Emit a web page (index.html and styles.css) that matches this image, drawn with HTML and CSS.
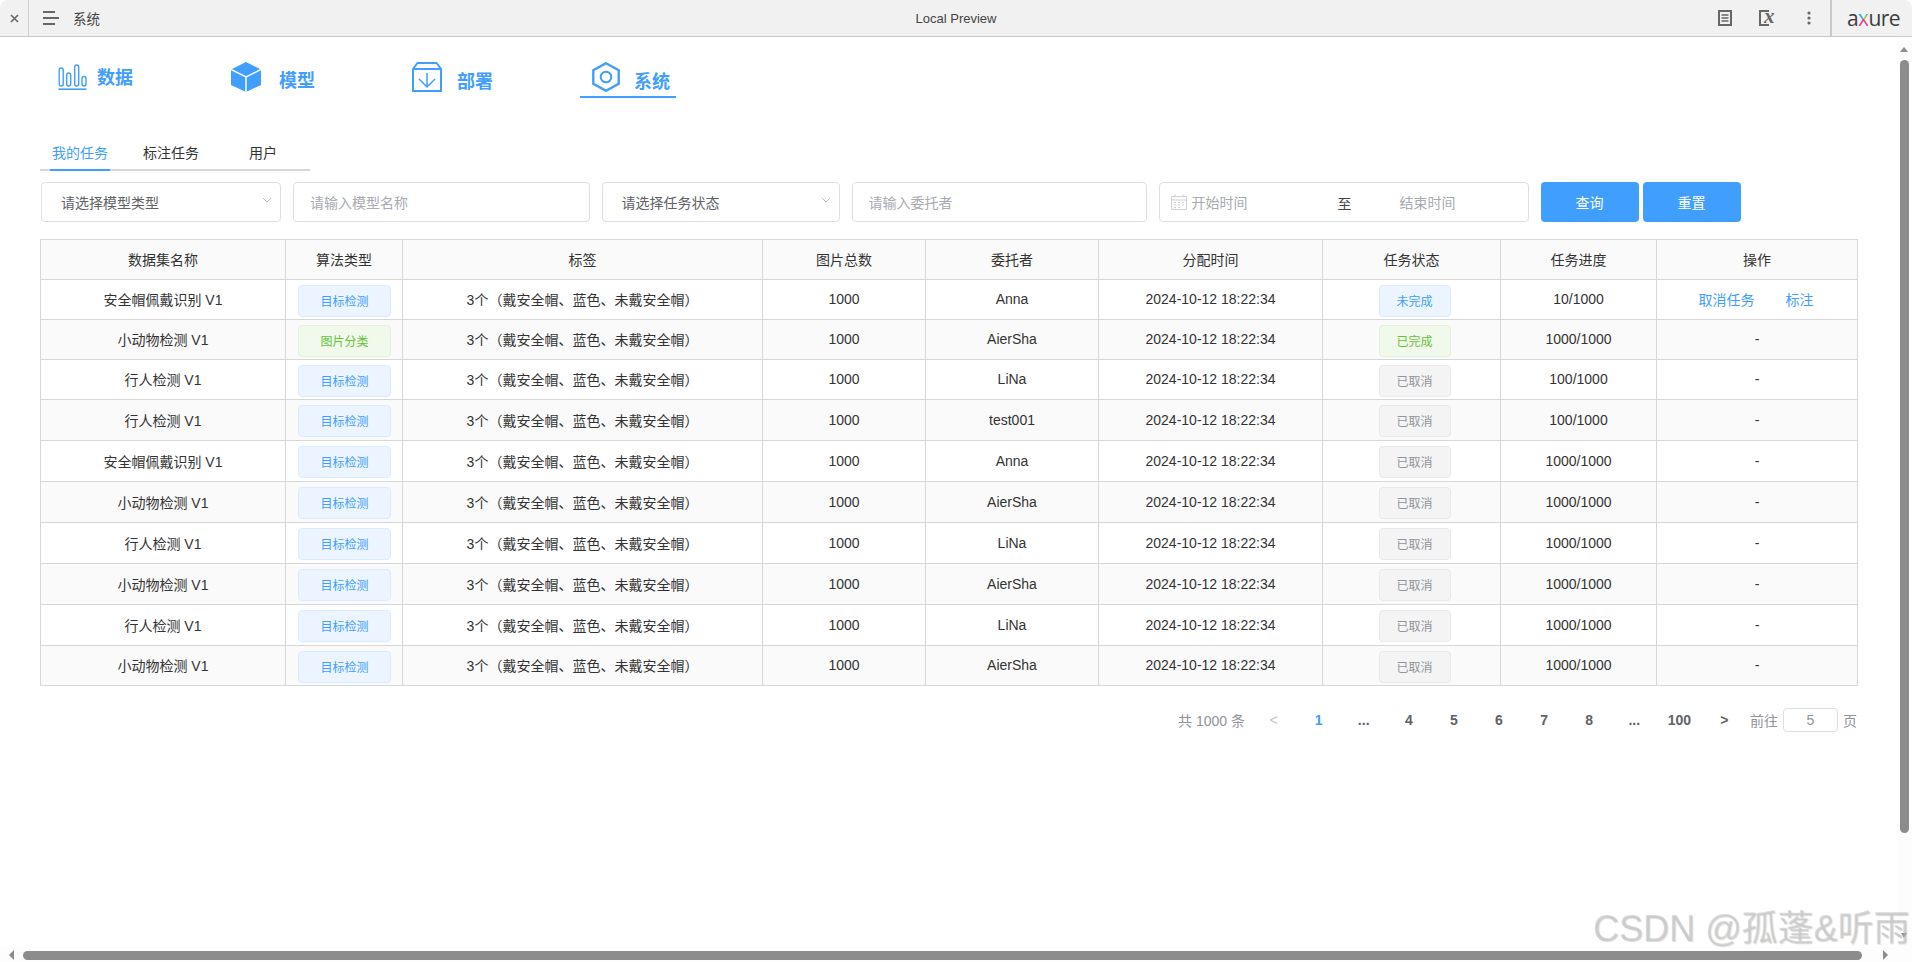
FILE: index.html
```html
<!DOCTYPE html>
<html lang="zh-CN">
<head>
<meta charset="utf-8">
<title>Local Preview</title>
<link rel="stylesheet" href="styles.css">
</head>
<body>
<header class="topbar">
  <div class="close-box"><svg width="9" height="9" viewBox="0 0 9 9"><path d="M1 1l7 7M8 1L1 8" stroke="#666" stroke-width="1.6" fill="none"/></svg></div>
  <div class="menu-ico"><svg width="16" height="14" viewBox="0 0 16 14"><path d="M0 1h12M0 7h16M0 13h12" stroke="#666" stroke-width="2" fill="none"/></svg></div>
  <div class="page-name">系统</div>
  <div class="preview-title">Local Preview</div>
  <div class="tools">
    <svg class="tool-a" width="14" height="16" viewBox="0 0 14 16"><path d="M1 1h12v14H1z" fill="none" stroke="#666" stroke-width="2"/><path d="M3.5 5h7M3.5 8h7M3.5 11h7" stroke="#666" stroke-width="1.4"/></svg>
    <div class="tool-b"><span class="var-x">x</span></div>
    <svg class="tool-c" width="4" height="14" viewBox="0 0 4 14"><circle cx="2" cy="2" r="1.6" fill="#666"/><circle cx="2" cy="7" r="1.6" fill="#666"/><circle cx="2" cy="12" r="1.6" fill="#666"/></svg>
  </div>
  <div class="brand"><span>a</span><span class="brand-x">x</span><span>ure</span></div>
</header>

<main class="main">
  <nav class="nav">
    <a class="nav-item nav-data">
      <svg width="29" height="26" viewBox="0 0 29 26" fill="none" stroke="#409eff" stroke-width="1.4"><rect x="1.2" y="4" width="4" height="18" rx="2"/><rect x="8.7" y="9" width="4" height="13" rx="2"/><rect x="16.7" y="1" width="4" height="21" rx="2"/><rect x="24" y="12.5" width="4" height="9.5" rx="2"/><path d="M0.5 25.2h28" stroke-width="1.6"/></svg>
      <span class="nav-text">数据</span>
    </a>
    <a class="nav-item nav-model">
      <svg width="30" height="30" viewBox="0 0 30 30"><path d="M15 0l15 7.500v15.500L15 30 0 23V7.500z" fill="#409eff"/><path d="M0 7.500l15 7.500 15-7.500M15 15v15" fill="none" stroke="#fff" stroke-width="1.5"/></svg>
      <span class="nav-text">模型</span>
    </a>
    <a class="nav-item nav-deploy">
      <svg width="30" height="30" viewBox="0 0 30 30" fill="none" stroke="#409eff"><path d="M1 7l4.500-6h19L29 7v22H1zM1 7h28" stroke-width="2"/><path d="M15 11v14M7 17l8 8 8-8" stroke-width="1.500"/></svg>
      <span class="nav-text">部署</span>
    </a>
    <a class="nav-item nav-system">
      <svg width="28" height="30" viewBox="0 0 28 30" fill="none" stroke="#409eff"><path d="M14 1.200l12.700 7v13.600L14 28.800 1.300 21.800V8.200z" stroke-width="2.400"/><circle cx="14" cy="15" r="5.300" stroke-width="2"/></svg>
      <span class="nav-text">系统</span>
    </a>
  </nav>

  <div class="tabs">
    <a class="tab tab-active">我的任务</a>
    <a class="tab tab-second">标注任务</a>
    <a class="tab tab-third">用户</a>
  </div>

  <form class="filters">
    <div class="field select select-a"><span>请选择模型类型</span><svg class="chev" width="10" height="6" viewBox="0 0 10 6"><path d="M1 1l4 4 4-4" fill="none" stroke="#c0c4cc"/></svg></div>
    <input class="field text-input input-a" placeholder="请输入模型名称">
    <div class="field select select-b"><span>请选择任务状态</span><svg class="chev" width="10" height="6" viewBox="0 0 10 6"><path d="M1 1l4 4 4-4" fill="none" stroke="#c0c4cc"/></svg></div>
    <input class="field text-input input-b" placeholder="请输入委托者">
    <div class="field date">
      <svg class="cal" width="16" height="16" viewBox="0 0 16 16" fill="none" stroke="#d0d0d0"><path d="M.5 2.500h15v13H.5zM.5 6h15M4 .5v3M12 .5v3"/><path d="M3 8.500h2M7 8.500h2M11 8.500h2M3 11h2M7 11h2M11 11h2M3 13.500h2M7 13.500h2" stroke-width="1"/></svg>
      <span class="date-ph">开始时间</span>
      <span class="date-sep">至</span>
      <span class="date-ph date-end">结束时间</span>
    </div>
    <div class="btns">
      <button type="button" class="btn">查询</button>
      <button type="button" class="btn">重置</button>
    </div>
  </form>

  <table class="grid">
    <colgroup>
      <col class="c1"><col class="c2"><col class="c3"><col class="c4"><col class="c5"><col class="c6"><col class="c7"><col class="c8"><col class="c9">
    </colgroup>
    <thead>
      <tr><th>数据集名称</th><th>算法类型</th><th>标签</th><th>图片总数</th><th>委托者</th><th>分配时间</th><th>任务状态</th><th>任务进度</th><th>操作</th></tr>
    </thead>
    <tbody>
      <tr><td>安全帽佩戴识别 V1</td><td class="tc tc-type"><span class="tag tag-type blue">目标检测</span></td><td class="labels">3个（戴安全帽、蓝色、未戴安全帽）</td><td>1000</td><td>Anna</td><td>2024-10-12 18:22:34</td><td class="tc tc-state"><span class="tag tag-state blue">未完成</span></td><td>10/1000</td><td class="ops"><a class="op">取消任务</a><a class="op op-second">标注</a></td></tr>
      <tr><td>小动物检测 V1</td><td class="tc tc-type"><span class="tag tag-type green">图片分类</span></td><td class="labels">3个（戴安全帽、蓝色、未戴安全帽）</td><td>1000</td><td>AierSha</td><td>2024-10-12 18:22:34</td><td class="tc tc-state"><span class="tag tag-state green">已完成</span></td><td>1000/1000</td><td>-</td></tr>
      <tr><td>行人检测 V1</td><td class="tc tc-type"><span class="tag tag-type blue">目标检测</span></td><td class="labels">3个（戴安全帽、蓝色、未戴安全帽）</td><td>1000</td><td>LiNa</td><td>2024-10-12 18:22:34</td><td class="tc tc-state"><span class="tag tag-state gray">已取消</span></td><td>100/1000</td><td>-</td></tr>
      <tr class="tall"><td>行人检测 V1</td><td class="tc tc-type"><span class="tag tag-type blue">目标检测</span></td><td class="labels">3个（戴安全帽、蓝色、未戴安全帽）</td><td>1000</td><td>test001</td><td>2024-10-12 18:22:34</td><td class="tc tc-state"><span class="tag tag-state gray">已取消</span></td><td>100/1000</td><td>-</td></tr>
      <tr class="tall"><td>安全帽佩戴识别 V1</td><td class="tc tc-type"><span class="tag tag-type blue">目标检测</span></td><td class="labels">3个（戴安全帽、蓝色、未戴安全帽）</td><td>1000</td><td>Anna</td><td>2024-10-12 18:22:34</td><td class="tc tc-state"><span class="tag tag-state gray">已取消</span></td><td>1000/1000</td><td>-</td></tr>
      <tr class="tall"><td>小动物检测 V1</td><td class="tc tc-type"><span class="tag tag-type blue">目标检测</span></td><td class="labels">3个（戴安全帽、蓝色、未戴安全帽）</td><td>1000</td><td>AierSha</td><td>2024-10-12 18:22:34</td><td class="tc tc-state"><span class="tag tag-state gray">已取消</span></td><td>1000/1000</td><td>-</td></tr>
      <tr class="tall"><td>行人检测 V1</td><td class="tc tc-type"><span class="tag tag-type blue">目标检测</span></td><td class="labels">3个（戴安全帽、蓝色、未戴安全帽）</td><td>1000</td><td>LiNa</td><td>2024-10-12 18:22:34</td><td class="tc tc-state"><span class="tag tag-state gray">已取消</span></td><td>1000/1000</td><td>-</td></tr>
      <tr class="tall"><td>小动物检测 V1</td><td class="tc tc-type"><span class="tag tag-type blue">目标检测</span></td><td class="labels">3个（戴安全帽、蓝色、未戴安全帽）</td><td>1000</td><td>AierSha</td><td>2024-10-12 18:22:34</td><td class="tc tc-state"><span class="tag tag-state gray">已取消</span></td><td>1000/1000</td><td>-</td></tr>
      <tr class="tall"><td>行人检测 V1</td><td class="tc tc-type"><span class="tag tag-type blue">目标检测</span></td><td class="labels">3个（戴安全帽、蓝色、未戴安全帽）</td><td>1000</td><td>LiNa</td><td>2024-10-12 18:22:34</td><td class="tc tc-state"><span class="tag tag-state gray">已取消</span></td><td>1000/1000</td><td>-</td></tr>
      <tr><td>小动物检测 V1</td><td class="tc tc-type"><span class="tag tag-type blue">目标检测</span></td><td class="labels">3个（戴安全帽、蓝色、未戴安全帽）</td><td>1000</td><td>AierSha</td><td>2024-10-12 18:22:34</td><td class="tc tc-state"><span class="tag tag-state gray">已取消</span></td><td>1000/1000</td><td>-</td></tr>
    </tbody>
  </table>

  <div class="pager">
    <span class="total">共 1000 条</span>
    <a class="pg pg-arrow pg-dim">&lt;</a>
    <a class="pg pg-current">1</a>
    <a class="pg">...</a>
    <a class="pg">4</a>
    <a class="pg">5</a>
    <a class="pg">6</a>
    <a class="pg">7</a>
    <a class="pg">8</a>
    <a class="pg">...</a>
    <a class="pg">100</a>
    <a class="pg pg-arrow">&gt;</a>
    <span class="goto">前往</span>
    <span class="goto-box">5</span>
    <span class="goto-end">页</span>
  </div>
</main>

<div class="vtrack">
  <span class="arr-up"></span>
  <span class="vthumb"></span>
  <span class="arr-down"></span>
</div>
<div class="htrack">
  <span class="arr-left"></span>
  <span class="hthumb"></span>
  <span class="arr-right"></span>
</div>
<div class="watermark">CSDN @孤蓬&amp;听雨</div>
</body>
</html>
```
FILE: styles.css
```css
* { box-sizing: border-box; }
html, body { margin: 0; padding: 0; }
body {
  width: 1912px;
  height: 962px;
  overflow: hidden;
  position: relative;
  background: #fff;
  font-family: "Liberation Sans", "Noto Sans CJK SC", sans-serif;
  font-size: 14px;
  color: #333;
}

/* top bar */
.topbar {
  height: 37px;
  display: flex;
  align-items: center;
  background: #f1f1f1;
  border-bottom: 1px solid #c9c9c9;
  border-radius: 8px 8px 0 0;
  position: relative;
}
.close-box {
  width: 29px;
  height: 36px;
  display: flex;
  align-items: center;
  justify-content: center;
  border-right: 1px solid #cfcfcf;
  padding-top: 1px;
}
.close-box svg { display: block; }
.menu-ico { margin-left: 14px; display: flex; }
.page-name { margin-left: 14px; font-size: 13.500px; color: #444; }
.preview-title {
  position: absolute;
  left: 0;
  right: 0;
  top: 11px;
  text-align: center;
  font-size: 13px;
  line-height: 16px;
  color: #444;
  pointer-events: none;
}
.tools { margin-left: auto; display: flex; align-items: center; height: 36px; }
.tool-a { display: block; }
.tool-b {
  margin: 0 4px 0 27px;
  width: 10px;
  height: 16px;
  border: 2px solid #666;
  border-right: 0;
  position: relative;
}
.var-x {
  position: absolute;
  left: 3px;
  top: -8px;
  font-family: "Liberation Serif", serif;
  font-style: italic;
  font-weight: bold;
  font-size: 21px;
  line-height: 24px;
  color: #666;
}
.tool-c { margin-left: 34px; display: block; }
.brand {
  margin-left: 19px;
  width: 82px;
  height: 36px;
  border-left: 2px solid #c9c9c9;
  padding-left: 15px;
  display: flex;
  align-items: center;
  font-family: "Open Sans", sans-serif;
  font-size: 21px;
  letter-spacing: -0.6px;
  color: #3c3c3c;
}
.brand-x {
  background: conic-gradient(from 45deg, #9bc83c 0 90deg, #e6398f 90deg 180deg, #17a9dc 180deg 360deg);
  -webkit-background-clip: text;
  background-clip: text;
  color: transparent;
}

/* main */
.main { padding: 25px 0 0 40px; }

.nav { display: flex; height: 36px; }
.nav-item { display: flex; align-items: flex-start; color: #409eff; }
.nav-item svg { display: block; flex: none; }
.nav-text { font-size: 18px; font-weight: bold; line-height: 20px; }
.nav-data { margin-left: 18px; padding-top: 2px; }
.nav-data .nav-text { margin-left: 10px; margin-top: 4px; }
.nav-model { margin-left: 98px; }
.nav-model .nav-text { margin-left: 18px; margin-top: 9px; }
.nav-deploy { margin-left: 97px; }
.nav-deploy .nav-text { margin-left: 15px; margin-top: 10px; }
.nav-system {
  margin-left: 87px;
  padding: 0 6px 0 12px;
  border-bottom: 2px solid #409eff;
}
.nav-system .nav-text { margin-left: 14px; margin-top: 10px; }

.tabs {
  display: flex;
  width: 270px;
  height: 38px;
  margin-top: 35px;
  border-bottom: 2px solid #d7d7d7;
}
.tab { height: 38px; line-height: 40px; font-size: 14px; }
.tab-active {
  width: 60px;
  margin-left: 10px;
  text-align: center;
  color: #409eff;
  border-bottom: 2px solid #409eff;
}
.tab-second { margin-left: 33px; }
.tab-third { margin-left: 50px; }

.filters { display: flex; gap: 12px; margin: 11px 0 0 1px; height: 40px; }
.field {
  height: 40px;
  background: #fff;
  border: 1px solid #dcdfe6;
  border-radius: 4px;
  font-family: inherit;
  font-size: 14px;
}
.select {
  display: flex;
  align-items: center;
  justify-content: space-between;
  padding: 0 8px 0 19px;
  color: #606266;
}
.select-a { width: 240px; }
.select-b { width: 238px; }
.chev { margin-top: -4px; display: block; }
.text-input { padding: 2px 0 0 16px; outline: 0; color: #606266; }
.text-input::placeholder { color: #a8abb2; opacity: 1; }
.input-a { width: 296.500px; }
.input-b { width: 295px; }
.date {
  width: 370px;
  display: flex;
  align-items: center;
  padding: 0 0 0 11px;
}
.cal { display: block; }
.date-ph { color: #a8abb2; margin-left: 5px; }
.date-sep { color: #444; margin-left: 90px; padding-top: 2px; }
.date-end { margin-left: 48px; }
.btns { display: flex; gap: 4px; }
.btn {
  width: 98px;
  height: 40px;
  padding: 0;
  border: 0;
  border-radius: 4px;
  background: #409eff;
  color: #fff;
  font-family: inherit;
  font-size: 14px;
}

/* table */
.grid {
  width: 1817px;
  margin-top: 17px;
  table-layout: fixed;
  border-collapse: collapse;
  font-size: 14px;
  color: #333;
}
.c1 { width: 245px; }
.c2 { width: 117px; }
.c3 { width: 360px; }
.c4 { width: 163px; }
.c5 { width: 173px; }
.c6 { width: 224px; }
.c7 { width: 178px; }
.c8 { width: 156px; }
.c9 { width: 201px; }
.grid tr { height: 40px; }
.grid tr.tall { height: 41px; }
.grid th, .grid td {
  padding: 0 0 1px;
  border: 1px solid #d7d7d7;
  text-align: center;
  font-weight: normal;
  vertical-align: middle;
}
.grid th { background: #fafafa; }
.grid tbody tr:nth-child(even) td { background: #fafafa; }
.grid td.tc { padding: 2px 0 0; }
.grid td.tc-type { padding-left: 1px; }
.grid td.tc-state { padding-left: 6px; }
.tag {
  display: block;
  height: 32px;
  margin: 0 auto;
  line-height: 32px;
  border-radius: 4px;
  border: 1px solid;
  font-size: 12px;
}
.tag-type { width: 93px; }
.tag-state { width: 72px; }
.blue { color: #409eff; background: #ecf5ff; border-color: #d9ecff; }
.green { color: #67c23a; background: #f0f9eb; border-color: #e1f3d8; }
.gray { color: #909399; background: #f4f4f5; border-color: #e9e9eb; }
.op { color: #409eff; }
.op-second { margin-left: 31px; }
.grid td.ops { padding-right: 2px; }

/* pager */
.pager {
  display: flex;
  align-items: center;
  width: 1817px;
  height: 24px;
  margin-top: 22px;
  justify-content: flex-end;
  font-size: 14px;
  color: #606266;
}
.total { color: #909399; margin-right: 6px; }
.pg { width: 45.100px; text-align: center; font-weight: bold; }
.pg-current { color: #409eff; }
.pg-dim { color: #c0c4cc; font-weight: normal; }
.goto { color: #909399; margin-left: 3px; }
.goto-box {
  width: 55px;
  height: 24px;
  margin-left: 5px;
  border: 1px solid #dcdfe6;
  border-radius: 4px;
  text-align: center;
  line-height: 22px;
  color: #909399;
}
.goto-end { margin-left: 5px; color: #909399; }

/* scrollbars, drawn over the page */
.vtrack {
  position: absolute;
  top: 37px;
  right: 0;
  width: 15px;
  height: 925px;
  background: #fdfdfd;
}
.vthumb {
  position: absolute;
  left: 3px;
  top: 23px;
  width: 9px;
  height: 773px;
  border-radius: 5px;
  background: #8c8c8c;
}
.arr-up {
  position: absolute;
  left: 3px;
  top: 10px;
  border: 4.500px solid transparent;
  border-top: 0;
  border-bottom: 5px solid #8c8c8c;
}
.arr-down {
  position: absolute;
  left: 4px;
  top: 896px;
  border: 3.500px solid transparent;
  border-bottom: 0;
  border-top: 5px solid #8c8c8c;
}
.htrack {
  position: absolute;
  left: 0;
  bottom: 0;
  width: 1912px;
  height: 15px;
  background: #fdfdfd;
}
.hthumb {
  position: absolute;
  left: 23px;
  top: 4px;
  width: 1839px;
  height: 9px;
  border-radius: 5px;
  background: #8c8c8c;
}
.arr-left {
  position: absolute;
  left: 9px;
  top: 3px;
  border: 5px solid transparent;
  border-left: 0;
  border-right: 5px solid #8c8c8c;
}
.arr-right {
  position: absolute;
  left: 1883px;
  top: 3px;
  border: 5px solid transparent;
  border-right: 0;
  border-left: 5px solid #8c8c8c;
}
.watermark {
  position: absolute;
  left: 1593px;
  top: 906px;
  font-size: 36px;
  line-height: 46px;
  white-space: nowrap;
  color: rgba(190, 190, 190, 0.55);
  text-shadow: 1px 1px 1px rgba(150, 150, 150, 0.35);
}
```
